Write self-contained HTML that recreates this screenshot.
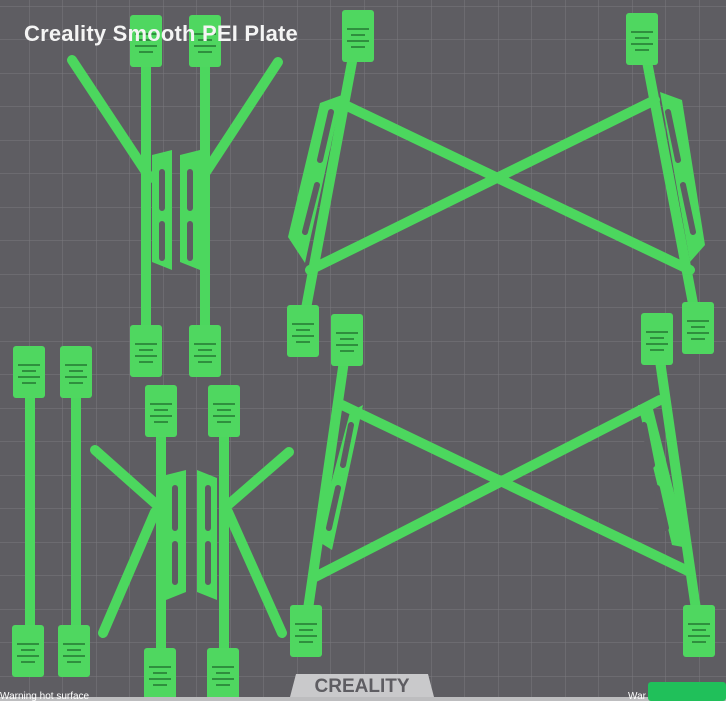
<!DOCTYPE html>
<html><head><meta charset="utf-8"><style>
html,body{margin:0;padding:0;width:726px;height:701px;overflow:hidden;background:#5e5d62}
svg{position:absolute;left:0;top:0}
.t{position:absolute;left:24px;top:21px;font:bold 22px "Liberation Sans",sans-serif;color:#f4f4f4;letter-spacing:0.2px}
</style></head><body>
<svg width="726" height="701" viewBox="0 0 726 701">
<defs>
<pattern id="g" width="33.5" height="33.5" patternUnits="userSpaceOnUse" x="29" y="6">
<path d="M0 0H33.5M0 0V33.5" stroke="#7a797e" stroke-width="1" fill="none"/>
</pattern>
<g id="tab">
<rect x="0" y="0" width="32" height="52" rx="3" fill="#4fd760"/>
<g stroke="#2f8f3e" stroke-width="2">
<path d="M5 19H27M9 25H23M5 31H27M9 37H23"/>
</g>
</g>
</defs>
<rect width="726" height="701" fill="url(#g)"/>
<g stroke="#4cd75e" stroke-width="10" stroke-linecap="round" fill="none">
<path d="M146 40V360M205 40V360M72 60L150 178M278 62L202 178"/>
<path d="M357 35L302 330M642 35L698 330M345 105L690 270M655 100L310 270"/>
<path d="M347 340L305 630M657 340L699 630M342 405L690 572M660 400L315 577"/>
<path d="M30 370V660M76 370V660M161 410V690M224 410V690M95 450L157 505M155 512L103 633M289 452L228 505M228 512L282 633"/>
</g>
<g fill="#4cd75e">
<polygon points="152,155 172,150 172,270 152,262"/>
<polygon points="200,150 180,155 180,262 200,270"/>
<polygon points="320,103 342,95 305,263 288,237"/>
<polygon points="660,92 682,100 705,245 690,262"/>
<polygon points="350,412 363,405 332,550 316,540"/>
<polygon points="638,405 652,405 688,548 672,545"/>
<polygon points="166,475 186,470 186,592 166,600"/>
<polygon points="197,470 217,478 217,600 197,592"/>
</g>
<g stroke="#5e5d62" stroke-width="6" stroke-linecap="round">
<path d="M162 172V208M162 224V258M190 172V208M190 224V258M175 488V528M175 544V582M208 488V528M208 544V582"/>
<path d="M331 112L320 160M317 185L305 232M668 112L678 160M683 185L693 232"/>
<path d="M351 425L343 465M338 488L329 528M644 425L652 465M657 488L666 528"/>
</g>
<use href="#tab" x="130" y="15"/><use href="#tab" x="189" y="15"/>
<use href="#tab" x="130" y="325"/><use href="#tab" x="189" y="325"/>
<use href="#tab" x="342" y="10"/><use href="#tab" x="287" y="305"/>
<use href="#tab" x="626" y="13"/><use href="#tab" x="682" y="302"/>
<use href="#tab" x="331" y="314"/><use href="#tab" x="290" y="605"/>
<use href="#tab" x="641" y="313"/><use href="#tab" x="683" y="605"/>
<use href="#tab" x="13" y="346"/><use href="#tab" x="60" y="346"/>
<use href="#tab" x="12" y="625"/><use href="#tab" x="58" y="625"/>
<use href="#tab" x="145" y="385"/><use href="#tab" x="208" y="385"/>
<use href="#tab" x="144" y="648"/><use href="#tab" x="207" y="648"/>
<polygon points="296,674 428,674 434,697 290,697" fill="#c9c9cb"/>
<text x="362" y="692" text-anchor="middle" font-family="Liberation Sans,sans-serif" font-weight="bold" font-size="19" fill="#5e5d62">CREALITY</text>
<rect x="0" y="697" width="726" height="4" fill="#bdbdbf"/>
<text x="0" y="699" font-family="Liberation Sans,sans-serif" font-size="10" fill="#fff">Warning hot surface</text>
<text x="628" y="699" font-family="Liberation Sans,sans-serif" font-size="10" fill="#fff">War</text>
<rect x="648" y="682" width="78" height="19" rx="3" fill="#20c05a"/>
</svg>
<div class="t">Creality Smooth PEI Plate</div>
</body></html>
